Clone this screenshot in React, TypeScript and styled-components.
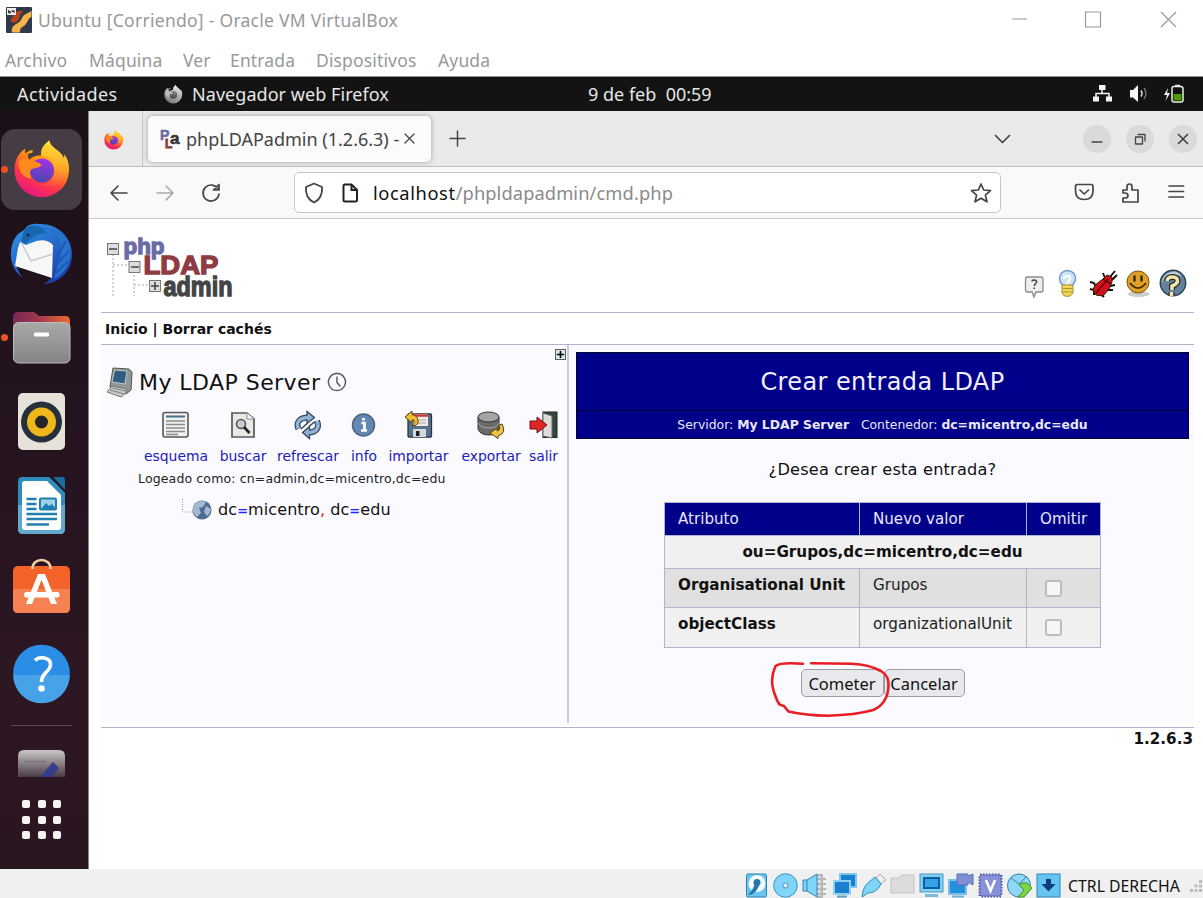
import React from "react";
import styled, { createGlobalStyle } from "styled-components";

const ui = '"Noto Sans", "Open Sans", sans-serif';
const dejavu = '"DejaVu Sans", sans-serif';
const line = "#b3b3cf";

const Global = createGlobalStyle`
  * { box-sizing: border-box; }
  body { margin: 0; background: #fff; }
  svg { display: block; flex: none; overflow: visible; }
`;

const Screen = styled.div`
  width: 1203px;
  height: 898px;
  display: flex;
  flex-direction: column;
  overflow: hidden;
  background: #fff;
`;

const Text = styled.span<{ $size: number; $ls?: number; $color?: string; $bold?: boolean; $font?: string }>`
  font-family: ${(p) => p.$font ?? dejavu};
  font-size: ${(p) => p.$size}px;
  letter-spacing: ${(p) => p.$ls ?? 0}px;
  color: ${(p) => p.$color ?? "#111"};
  font-weight: ${(p) => (p.$bold ? 700 : 400)};
  white-space: pre;
`;

/* ---------- host window ---------- */
const TitleBar = styled.header`
  height: 40px;
  flex: none;
  display: flex;
  align-items: center;
  padding-left: 6px;
`;
const TitleText = styled(Text)`
  margin-left: 6px;
  flex: 1;
`;
const MenuBar = styled.nav`
  height: 37px;
  flex: none;
  display: grid;
  grid-template-columns: 84px 94px 47px 86px 122px auto;
  align-items: center;
  padding: 4px 0 0 5px;
  border-bottom: 1px solid #8d8d8d;
`;

/* ---------- guest desktop ---------- */
const TopBar = styled.div`
  height: 34px;
  flex: none;
  background: #131313;
  display: grid;
  grid-template-columns: 147px 28px 396px 504px auto;
  align-items: center;
  padding-left: 17px;
`;
const Desktop = styled.div`
  height: 758px;
  flex: none;
  display: flex;
`;
const Dock = styled.aside`
  width: 89px;
  flex: none;
  display: flex;
  flex-direction: column;
  padding-top: 16px;
  background: linear-gradient(#1c1018, #251420 45%, #2c1722 75%, #2a1621);
  border-right: 1px solid #8a8488;
`;
const DockDivider = styled.div`
  height: 1px;
  width: 61px;
  margin: 10px 0 24px 11px;
  background: #5d4e57;
`;
const AppGrid = styled.div`
  display: grid;
  grid-template-columns: repeat(3, 8px);
  gap: 7.5px;
  margin: 23px 0 0 22px;
`;
const AppDot = styled.i`
  height: 8px;
  border-radius: 2px;
  background: #f4f2f3;
`;

/* ---------- browser ---------- */
const Browser = styled.main`
  flex: 1;
  display: flex;
  flex-direction: column;
  background: #fff;
`;
const TabStrip = styled.div`
  height: 56px;
  flex: none;
  display: flex;
  align-items: center;
  background: #eaeaea;
  border-bottom: 1px solid #bdbdbd;
`;
const PinnedTab = styled.div`
  width: 54px;
  height: 55px;
  display: flex;
  align-items: center;
  justify-content: center;
  border-right: 1px solid #c4c4c4;
  padding: 2px 3px 0 0;
`;
const Tab = styled.div`
  width: 283px;
  height: 46px;
  margin: 0 0 0 5px;
  padding-left: 12px;
  display: flex;
  align-items: center;
  background: #fbfbfb;
  border-radius: 5px;
  box-shadow: 0 0 4px 1px #b5b5b5;
`;
const TabTitle = styled(Text)`
  width: 218px;
  margin-left: 5px;
`;
const NewTab = styled.div`
  margin-left: 18px;
  width: 545px;
`;
const WindowButtons = styled.div`
  display: flex;
  gap: 15px;
  margin-left: 72px;
`;
const RoundButton = styled.div`
  width: 28px;
  height: 28px;
  border-radius: 50%;
  background: #dadada;
  display: flex;
  align-items: center;
  justify-content: center;
`;
const NavBar = styled.div`
  height: 52px;
  flex: none;
  display: flex;
  align-items: center;
  background: #f9f9fa;
  border-bottom: 1px solid #cdcdcd;
  padding-left: 20px;
`;
const NavButtons = styled.div`
  display: flex;
  gap: 26px;
  width: 185px;
`;
const UrlBox = styled.div`
  width: 707px;
  height: 41px;
  border: 1px solid #c6c6c6;
  border-radius: 5px;
  background: #fff;
  display: flex;
  align-items: center;
  padding-left: 9px;
`;
const PageGlyph = styled.svg`
  margin-left: 18px;
`;
const UrlText = styled.div`
  width: 597px;
  margin-left: 14px;
`;
const NavTools = styled.div`
  display: flex;
  gap: 25px;
  margin-left: 73px;
`;

/* ---------- phpLDAPadmin page ---------- */
const Page = styled.div`
  width: 1093px;
  margin-left: 12px;
  display: flex;
  flex-direction: column;
`;
const PageHeader = styled.div`
  height: 94px;
  display: flex;
  justify-content: space-between;
  border-bottom: 1px solid ${line};
  padding: 19px 6px 0 5px;
`;
const HeaderIcons = styled.div`
  display: flex;
  margin-top: 31px;
`;
const Control = styled.div`
  height: 32px;
  border-bottom: 1px solid ${line};
  padding: 0 0 0 4px;
  display: flex;
  align-items: center;
`;
const Panels = styled.div`
  height: 378px;
  display: flex;
`;
const TreePanel = styled.section`
  width: 468px;
  background: #fbfbff;
  border-right: 2px solid #cacadb;
  display: flex;
  flex-direction: column;
`;
const ExpandRow = styled.div`
  display: flex;
  justify-content: flex-end;
  padding: 4px 1px 0 0;
`;
const ExpandBox = styled.div`
  width: 11px;
  height: 11px;
  border: 1px solid #536068;
  background: #dce5e8;
  display: flex;
  align-items: center;
  justify-content: center;
`;
const ServerRow = styled.div`
  height: 34px;
  margin-top: 5px;
  padding-left: 5px;
  display: flex;
  align-items: center;
`;
const ServerName = styled(Text)`
  margin: 0 6px 0 6px;
`;
const ToolRow = styled.div`
  display: grid;
  grid-template-columns: 68px 66px 64px 48px 61px 84px 21px;
  justify-items: center;
  height: 55px;
  margin: 12px 0 0 41px;
`;
const Tool = styled.div`
  width: 80px;
  display: flex;
  flex-direction: column;
  align-items: center;
  gap: 9px;
`;
const LoginRow = styled.div`
  height: 24px;
  padding-left: 37px;
  display: flex;
  align-items: center;
`;
const TreeRow = styled.div`
  height: 39px;
  padding-left: 80px;
  display: flex;
  align-items: center;
`;
const TreeText = styled(Text)`
  margin-left: 6px;
`;
const MainPanel = styled.section`
  flex: 1;
  background: #fbfbff;
  display: flex;
  flex-direction: column;
  align-items: center;
  padding: 7px 5px 0 7px;
`;
const Banner = styled.div`
  width: 613px;
  flex: none;
  border: 1px solid #05052e;
  background: #00008b;
`;
const BannerTitle = styled.div`
  height: 58px;
  border-bottom: 1px solid #03032c;
  display: flex;
  align-items: center;
  justify-content: center;
`;
const BannerSub = styled.div`
  height: 27px;
  display: flex;
  align-items: center;
  justify-content: center;
`;
const Question = styled.div`
  height: 63px;
  display: flex;
  align-items: center;
  padding-bottom: 3px;
`;
const Entries = styled.div`
  width: 437px;
  flex: none;
  display: grid;
  grid-template-columns: 194px 166px 73px;
  gap: 1px;
  padding: 1px;
  background: ${line};
`;
const Cell = styled.div<{ $bg: string; $h: number; $top?: boolean; $full?: boolean }>`
  height: ${(p) => p.$h}px;
  background: ${(p) => p.$bg};
  display: flex;
  align-items: ${(p) => (p.$top ? "flex-start" : "center")};
  padding: ${(p) => (p.$top ? "7px" : "0")} 0 0 13px;
  ${(p) => p.$full && "grid-column: 1 / -1; justify-content: center; padding: 0;"}
`;
const Check = styled.div`
  width: 17px;
  height: 17px;
  margin: 4px 0 0 5px;
  border: 2px solid #bdbdc1;
  border-radius: 3px;
  background: #f6f6f6;
`;
const Actions = styled.div`
  position: relative;
  display: flex;
  margin-top: 21px;
`;
const Button = styled.button<{ $w: number }>`
  width: ${(p) => p.$w}px;
  height: 28px;
  padding: 0;
  border: 1px solid #9c9ca6;
  border-radius: 5px;
  background: #e9e9ed;
  display: flex;
  align-items: center;
  justify-content: center;
`;
const PenMark = styled.svg`
  position: absolute;
  left: -33.500px;
  top: -10px;
`;
const Footer = styled.footer`
  margin-top: 4px;
  border-top: 1px solid ${line};
  display: flex;
  justify-content: flex-end;
  padding: 2px 1px 0 0;
`;

/* ---------- host status bar ---------- */
const StatusBar = styled.footer`
  height: 29px;
  flex: none;
  background: #f0f0f0;
  display: flex;
  align-items: center;
  gap: 4.2px;
  padding: 4px 0 0 744px;
`;
const HostKey = styled(Text)`
  width: 118px;
  margin-left: 3px;
`;

/* ---------- drawings ---------- */
const FirefoxShape = ({ id, gray }: { id: string; gray?: boolean }) => (
  <g>
    <defs>
      <linearGradient id={`${id}a`} x1="0.8" y1="0" x2="0.3" y2="1">
        <stop offset="0" stopColor={gray ? "#fff" : "#fff044"} />
        <stop offset=".4" stopColor={gray ? "#bbb" : "#ff980e"} />
        <stop offset=".7" stopColor={gray ? "#999" : "#ff3647"} />
        <stop offset="1" stopColor={gray ? "#777" : "#e31587"} />
      </linearGradient>
      <linearGradient id={`${id}b`} x1=".6" y1="0" x2=".4" y2="1">
        <stop offset="0" stopColor={gray ? "#888" : "#a034e6"} />
        <stop offset="1" stopColor={gray ? "#444" : "#4a44b0"} />
      </linearGradient>
      <linearGradient id={`${id}c`} x1=".5" y1="0" x2=".4" y2="1">
        <stop offset="0" stopColor={gray ? "#eee" : "#ffe63a"} />
        <stop offset=".6" stopColor={gray ? "#bbb" : "#ffa52b"} />
        <stop offset="1" stopColor={gray ? "#999" : "#ff4a45"} />
      </linearGradient>
    </defs>
    <path d="M34.500 0C28 5 26 10 26.500 15C20 15 17 17 15 19C13 17 13 15 14 13C18 13 18.500 12 18 9.500C14 10 12.500 11.500 11 13C10 11 10.500 9.500 11 8C3 13 0 21 0 29A27 27 0 0 0 54.500 30C55 23 52.500 17 49.500 14C50 16 50 17 49.500 18C46 9 36 8 34.500 0Z" fill={`url(#${id}a)`} />
    <path d="M35 0C28 5 26 10 27 15C34 16 40 21 40 30C40 39 34 44 26 44C36 48 46 44 50 36C55 28 54 19 49.500 14C50 16 50 17 49.500 18C46 9 36 8 35 0Z" fill={`url(#${id}c)`} opacity=".9" />
    <circle cx="27.500" cy="30" r="12" fill={`url(#${id}b)`} />
    <path d="M4 22C7 17 11 17 15 19.500C19 20 23 21 27.500 24.500C24 28 20 27 16.500 29C15 31 15 34 17 38C9 38 4 31 4 22Z" fill={gray ? "#bbb" : "#ff8a1e"} />
  </g>
);

const DockSlot = ({ children }: { children: React.ReactNode }) => (
  <svg width="84" height="84" viewBox="0 0 84 84">{children}</svg>
);

const DockIcons = () => (
  <>
    <DockSlot>
      <rect x="1" y="2" width="81" height="81" rx="14" fill="#463c43" />
      <circle cx="4.500" cy="42.500" r="3.500" fill="#e95420" />
      <g transform="translate(14.500 13.500)"><FirefoxShape id="dockfx" /></g>
    </DockSlot>
    <DockSlot>
      <defs>
        <linearGradient id="tb" x1="0" y1="0" x2=".6" y2="1">
          <stop offset="0" stopColor="#2f9be8" /><stop offset="1" stopColor="#1e3fb0" />
        </linearGradient>
      </defs>
      <path d="M24 19C27 14 32 12 39 13C56 12 72 25 72 43C72 60 60 72 44 73C47 71 50 69 52 66L16 54C19 62 22 67 25 68C14 62 10 51 11 40C12 30 16 23 24 19Z" fill="url(#tb)" />
      <path d="M40 17C55 19 63 28 61 42L54 68C66 62 72 50 70 36C66 22 55 15 40 17Z" fill="#2673cc" />
      <path d="M20 31L18 37L15 55L52 67L53 34C44 25 34 31 26 34Z" fill="#f7f7f7" />
      <path d="M21 31L31 50L53 43" fill="none" stroke="#c9c9cf" strokeWidth="1.500" />
      <path d="M24 19C30 12 42 13 47 23C38 21 31 27 26 33L21 31Z" fill="#1766b0" />
      <path d="M66 30L58 44M69 40L56 54M68 50L55 63" stroke="#1e57b8" strokeWidth="2" />
      <circle cx="28" cy="24" r="1.500" fill="#0d2a50" />
    </DockSlot>
    <DockSlot>
      <defs>
        <linearGradient id="fo"><stop offset="0" stopColor="#77285a" /><stop offset=".45" stopColor="#a1384b" /><stop offset="1" stopColor="#ef6a31" /></linearGradient>
        <linearGradient id="fg" x2="0" y2="1"><stop offset="0" stopColor="#a9a9a9" /><stop offset="1" stopColor="#848484" /></linearGradient>
      </defs>
      <circle cx="4.500" cy="42.500" r="3.500" fill="#e95420" />
      <path d="M13 22Q13 17 18 17H34L39 21H65Q70 21 70 26V40H13Z" fill="url(#fo)" />
      <rect x="13.500" y="27.500" width="56.500" height="40.500" rx="5" fill="url(#fg)" stroke="#bcbcbc" />
      <rect x="34" y="37.500" width="15" height="4" rx="1" fill="#fff" />
    </DockSlot>
    <DockSlot>
      <rect x="18" y="14" width="47" height="57" rx="5" fill="#e6e2da" />
      <circle cx="41.500" cy="43" r="20.500" fill="#25303a" />
      <circle cx="41.500" cy="43" r="14.500" fill="#efb71c" />
      <circle cx="41.500" cy="43" r="6.500" fill="#262626" />
    </DockSlot>
    <DockSlot>
      <path d="M22 14H49L65 28V66Q65 71 60 71H23Q18 71 18 66V19Q18 14 22 14Z" fill="#2f8dbd" />
      <path d="M18 42H65V66Q65 71 60 71H23Q18 71 18 66Z" fill="#62a9cd" />
      <path d="M49 13H53L66 27V31Z" fill="#25141f" />
      <path d="M53 14H62Q65 14 65 17V27Z" fill="#1d6a9c" />
      <path d="M25 18H47L61 32V64Q61 67 58 67H25Q22 67 22 64V21Q22 18 25 18Z" fill="#fff" />
      <path d="M26.500 36H36.500M26.500 41H36.500M26.500 46H36.500M26.500 51H57M26.500 56H57M26.500 61.500H49" stroke="#1f7fae" strokeWidth="2.400" />
      <rect x="40" y="35.500" width="16" height="11" rx="1" fill="#9fd3ec" stroke="#1f7fae" strokeWidth="2" />
      <path d="M41 46L46 40L49 43L52 41L56 46Z" fill="#1f7fae" />
    </DockSlot>
    <DockSlot>
      <rect x="13" y="19" width="57" height="47" rx="5" fill="#f4632a" />
      <path d="M13 42H70V61Q70 66 65 66H18Q13 66 13 61Z" fill="#f68253" />
      <path d="M32.500 22C32 10 51 10 50.500 22" fill="none" stroke="#f6cfa0" strokeWidth="2.400" />
      <path d="M38 27H45L57 57H51L41.500 33L32 57H26Z" fill="#fff" />
      <rect x="24" y="45" width="35.500" height="5.500" rx="2.500" fill="#fff" />
    </DockSlot>
    <DockSlot>
      <circle cx="41.500" cy="42" r="28.300" fill="#2b8ee6" />
      <path d="M13.200 44H69.800A28.300 28.300 0 0 1 13.200 44Z" fill="#47a2e8" />
      <path d="M35 29.500C39 25 51 26 50.500 34C50 41 41 42 41.500 51" fill="none" stroke="#fff" strokeWidth="3.600" />
      <circle cx="41.500" cy="57.500" r="3.200" fill="#fff" />
    </DockSlot>
  </>
);

const EditorIcon = () => (
  <svg width="84" height="27" viewBox="0 0 84 27">
    <defs><linearGradient id="ed" x2="0" y2="1"><stop offset="0" stopColor="#c9c5c8" /><stop offset="1" stopColor="#4a3b44" /></linearGradient></defs>
    <path d="M18 27V6Q18 0 24 0H59Q65 0 65 6V27Z" fill="url(#ed)" />
    <path d="M24 11.500H46M24 17H40" stroke="#79737a" strokeWidth="1.500" />
    <path d="M40 27L53 12L59 18L52 27Z" fill="#363c8c" />
  </svg>
);

const VBoxIcon = () => (
  <svg width="26" height="26" viewBox="0 0 26 26">
    <rect width="26" height="26" rx="1" fill="#303a4a" />
    <path d="M4 14Q12 19 14 8L17 4Q12 3 9 6Z" fill="#b8431b" />
    <path d="M6 25.500C5 20 8 18 12 16C17 13 15 9 20 7L25.500 4V10C21 12 22 16 18 19C14 21 14 23 14 25.500Z" fill="#f5b54a" />
    <rect x="1" y="1" width="9" height="7" fill="#eee" />
    <path d="M2.500 3V6H4.500V4.500H2.500M6 3V4.500H8M8 3V6" fill="none" stroke="#333" />
  </svg>
);

const Stroke = ({ w, h, d, c = "#444", sw = 1.6 }: { w: number; h: number; d: string; c?: string; sw?: number }) => (
  <svg width={w} height={h} viewBox={`0 0 ${w} ${h}`} fill="none" stroke={c} strokeWidth={sw} strokeLinejoin="round" strokeLinecap="round">
    <path d={d} />
  </svg>
);

const WinControls = () => (
  <svg width="191" height="20" viewBox="0 0 191 20" fill="none" stroke="#999" strokeWidth="1.200">
    <path d="M0 9H15M73.500 2H88.500V17H73.500ZM149 2L164 17M164 2L149 17" />
  </svg>
);

const SystemTray = () => (
  <svg width="94" height="22" viewBox="0 0 94 22">
    <g fill="#f5f5f5">
      <rect x="7" y="2" width="6.500" height="5" /><rect x="1" y="13.500" width="6" height="5" /><rect x="14" y="13.500" width="6" height="5" />
      <path d="M38 7H41L46 2V19L41 14.500H38Z" />
      <path d="M76 5L72 12H75L73.500 18L78 10H75Z" />
    </g>
    <path d="M10 6V10M4 14V10.500H17V14" fill="none" stroke="#f5f5f5" strokeWidth="1.500" />
    <path d="M49 7.500Q51 10.500 49 13.500" fill="none" stroke="#ddd" strokeWidth="1.500" />
    <path d="M52 5Q56 10.500 52 16" fill="none" stroke="#777" strokeWidth="1.500" />
    <path d="M82 3.500H88M81.500 3.500H88.500Q91 3.500 91 6V17Q91 19 89 19H82Q80 19 80 17V5Q80 3.500 81.500 3.500ZM83 2.500H88" fill="none" stroke="#e6f0e0" strokeWidth="1.500" />
    <rect x="81.500" y="11" width="8" height="6.500" fill="#4e9a06" />
  </svg>
);

const PlaLogo = () => (
  <svg width="130" height="66" viewBox="0 0 130 66">
    <path d="M7 16V58M7 27H22M28 33V58M28 47H42" stroke="#d2d2cc" strokeWidth="2" strokeDasharray="2 2" fill="none" />
    <g fill="#ddd" stroke="#777">
      <rect x="1.500" y="5.500" width="11" height="11" /><rect x="23" y="23.500" width="11" height="11" /><rect x="43.500" y="42.500" width="11" height="11" />
    </g>
    <path d="M3 11H11M25 29H33M45 48H53M49 44V52" stroke="#444" strokeWidth="1.600" />
    <g fontFamily="Liberation Sans, sans-serif" fontWeight="700" strokeWidth="1.300">
      <text x="17.500" y="16" fontSize="22" textLength="41" lengthAdjust="spacingAndGlyphs" fill="#6b6ba6" stroke="#6b6ba6">php</text>
      <text x="37.500" y="36" fontSize="25.500" textLength="75" lengthAdjust="spacingAndGlyphs" fill="#8f3b42" stroke="#8f3b42">LDAP</text>
      <text x="57.500" y="58" fontSize="27" textLength="69" lengthAdjust="spacingAndGlyphs" fill="#444" stroke="#444">admin</text>
    </g>
  </svg>
);

const PageIcons = () => (
  <svg width="164" height="32" viewBox="0 0 164 32">
    <path d="M1.500 10Q1.500 8 3.500 8H17Q19 8 19 10V21Q19 23 17 23H12L10 28L8 23H3.500Q1.500 23 1.500 21Z" fill="#eee" stroke="#8a8a8a" strokeWidth="1.300" />
    <path d="M8 12.500Q8 11 10 11Q13 11 12.500 13.500Q10.500 15 10.300 17M10.300 18.500V20" fill="none" stroke="#444" strokeWidth="1.500" />
    <circle cx="43.500" cy="9.500" r="8" fill="#cfe3f7" stroke="#6b97ca" strokeWidth="1.500" />
    <path d="M40 10Q40 7 43.500 7Q47 7 46 10L43 15" fill="none" stroke="#fff" strokeWidth="2" />
    <path d="M38 16H49V24Q47 27.500 43.500 27.500Q39 27.500 38 24Z" fill="#f0d75a" stroke="#a98e2c" />
    <path d="M38.500 19.500H48.500M38.500 23H48.500" stroke="#b2952d" />
    <path d="M66 13L70 14L72 18M66 20L70 21V26M81 9L79 4M86 8L91 2M88 11L93 6M86 17L91 16M82 21H89M77 25L80 28" stroke="#111" strokeWidth="1.900" fill="none" />
    <path d="M71 16L79 10L83 6L88 8L88 13L85 20L79 27L72 26L69 21Z" fill="#d40f1a" stroke="#220" />
    <path d="M72 24L84 10M79 10L87 15" stroke="#500" strokeWidth="1.400" />
    <ellipse cx="114.500" cy="25" rx="11" ry="3" fill="#ccc" />
    <circle cx="114" cy="13" r="11" fill="#e0a025" stroke="#7b5310" />
    <path d="M110.500 6.500V12.500M117.500 6.500V12.500" stroke="#222" strokeWidth="2.200" />
    <path d="M106 14Q114 24 122 14" fill="none" stroke="#3d2600" strokeWidth="1.700" />
    <circle cx="149" cy="14" r="12.700" fill="#62829d" stroke="#2e4456" strokeWidth="1.500" />
    <path d="M137.500 14Q143.500 3 157.500 7Q153.500 1 146.500 3Q138.500 6 137.500 14Z" fill="#b9cbda" />
    <path d="M143 12Q143.500 8 148.500 8Q154 8 153.500 13Q151.500 16 148 17V21M147.500 23V27" fill="none" stroke="#28241a" strokeWidth="6" />
    <path d="M143 12Q143.500 8 148.500 8Q154 8 153.500 13Q151.500 16 148 17V21M147.500 23V27" fill="none" stroke="#f2e6ae" strokeWidth="3.600" />
  </svg>
);

const ServerIcon = () => (
  <svg width="27" height="30" viewBox="0 0 27 30">
    <path d="M7 1L23 2L26 5L25 23L20 27L4 20Z" fill="#8f9896" stroke="#555" />
    <path d="M8.500 3L21 4L19 17L6 15Z" fill="#315e80" stroke="#c2cac8" />
    <path d="M6 19L21 22L20 26L15 30L1 25Z" fill="#c3cac6" stroke="#777" />
    <path d="M4 23L18 27M6 21L20 24" stroke="#7c8683" />
  </svg>
);

const refreshArcs = "M4.500 18C1.500 11 6 6.500 14 6.500M23 10C26 17 22 21.500 14.500 21.500";
const toolDrawings: Record<string, React.ReactNode> = {
  esquema: (
    <>
      <rect x="1" y="1.500" width="25" height="24.500" rx="2" fill="#f1f1ee" stroke="#55585b" strokeWidth="1.600" />
      <path d="M4 5.500H23" stroke="#45708c" strokeWidth="2" />
      <path d="M4 10H23M4 13.500H23M4 17H23M4 20.500H23M4 23.500H16" stroke="#8b8d8b" strokeWidth="1.300" />
    </>
  ),
  buscar: (
    <>
      <path d="M3 2H18L25 8V26H3Z" fill="#e9e9e4" stroke="#55585b" strokeWidth="1.700" />
      <path d="M18 2V8H25" fill="#fff" stroke="#888" />
      <circle cx="12" cy="13" r="4.500" fill="#c6d0d2" stroke="#555" strokeWidth="1.600" />
      <path d="M15 16L20.500 22" stroke="#222" strokeWidth="2.600" />
    </>
  ),
  refrescar: (
    <>
      <path d={refreshArcs} fill="none" stroke="#30465c" strokeWidth="6" />
      <path d="M13 0.500L20.500 6.500L13 12.500ZM15.500 15.500L8.500 21.500L15.500 27.500Z" fill="#92b2d2" stroke="#30465c" strokeWidth="1.300" />
      <path d={refreshArcs} fill="none" stroke="#92b2d2" strokeWidth="3.600" />
      <path d="M7 18L13 12.500M21 10.500L15 15.500" stroke="#30465c" strokeWidth="1.500" />
    </>
  ),
  info: (
    <>
      <circle cx="13.500" cy="14" r="11" fill="#6288b3" stroke="#4c6482" strokeWidth="1.500" />
      <path d="M11.500 12H14.500V19M11 19.500H17M13.500 7V9.500" fill="none" stroke="#fff" strokeWidth="2.700" />
    </>
  ),
  importar: (
    <>
      <rect x="3" y="3" width="23.500" height="23" rx="1" fill="#55718c" stroke="#273645" strokeWidth="1.300" />
      <rect x="8" y="3" width="15" height="12" fill="#f0e8e6" />
      <path d="M8 4.500H23" stroke="#c23b3b" strokeWidth="2.500" />
      <path d="M11 9H21M11 12H21" stroke="#aaa" />
      <rect x="8" y="18" width="13" height="8" fill="#d6d9dc" />
      <rect x="11" y="20" width="3.500" height="5" fill="#222" />
      <path d="M0 6L7 0V3.500Q14 5 13 12Q12 15 7 15Q10 13 9 9H7V12Z" fill="#eebd36" stroke="#5d4208" />
    </>
  ),
  exportar: (
    <>
      <path d="M1 6V18Q3 24 12 24Q21 24 22 18V6Z" fill="#6a6a6a" stroke="#333" />
      <ellipse cx="11.500" cy="6" rx="10.500" ry="5" fill="#a5a5a3" stroke="#333" />
      <path d="M1 12Q4 17 12 17Q20 17 22 12" fill="none" stroke="#aaa" />
      <path d="M25 13Q30 22 21 25V27.500L13 22L20 17V20Q24 19 22 14Z" fill="#eec247" stroke="#5d4208" />
    </>
  ),
  salir: (
    <>
      <rect x="13" y="1" width="14" height="25.500" fill="#31483c" stroke="#222" />
      <path d="M13 2L22 5V27L13 25Z" fill="#dcdcd8" stroke="#666" />
      <path d="M0 10H7V6L17 14L7 22V18H0Z" fill="#df2525" stroke="#701010" />
    </>
  ),
};

const StatusIcon = ({ children }: { children: React.ReactNode }) => (
  <svg width="25" height="25" viewBox="0 0 25 25">{children}</svg>
);
const sky = "#7fd4f7";
const blue = "#1b7fd0";
const StatusIcons = () => (
  <>
    <StatusIcon>
      <rect x="2.500" y="1" width="20" height="23" rx="1.500" fill="#68c5f0" stroke="#2b83b5" />
      <circle cx="13" cy="10.500" r="8.500" fill="#f3fbff" />
      <circle cx="13" cy="9.500" r="3.500" fill="#2874a8" />
      <path d="M4 22Q11 22 15 13L11 11Q9 17 4 22Z" fill="#2874a8" />
    </StatusIcon>
    <StatusIcon><circle cx="12.500" cy="12.500" r="11.800" fill={sky} stroke="#3a94c2" /><circle cx="12.500" cy="12.500" r="2.500" fill="#eee" stroke="#3a94c2" /></StatusIcon>
    <StatusIcon>
      <path d="M15 2H20V24H15M15 6H24M15 11H24M15 16H24M15 21H24" fill="#ddd" stroke="#b7b7b7" strokeWidth="2" />
      <path d="M1 7H5L15 1V24L5 18H1Z" fill={sky} stroke="#2e86b7" /><path d="M5 7V18" stroke="#2e86b7" />
    </StatusIcon>
    <StatusIcon>
      <rect x="8" y="1" width="16" height="13" fill={blue} stroke="#7fc6ee" strokeWidth="2" />
      <rect x="2" y="8" width="16" height="13" fill={blue} stroke="#8ed0f2" strokeWidth="2" /><path d="M5 23.500H15" stroke="#5a9ec2" strokeWidth="2" />
    </StatusIcon>
    <StatusIcon>
      <path d="M15 5L19 1L25 7L20 11Z" fill="#eee" stroke="#aaa" />
      <path d="M1 24Q2 13 8 9L14 4L20 11Q16 20 7 20Z" fill={sky} stroke="#358cb9" />
    </StatusIcon>
    <StatusIcon><path d="M1 20V5H8L12 2H24V20Z" fill="#dcdcdc" stroke="#c3c3c3" /></StatusIcon>
    <StatusIcon>
      <rect x="1" y="1" width="23" height="18" fill="#7ed1f5" stroke="#4d9bc5" /><rect x="5" y="5" width="15" height="10" fill="#37a2e8" stroke="#0b5f9f" strokeWidth="2" />
      <path d="M6 22.500H19" stroke="#7dbad8" strokeWidth="3" />
    </StatusIcon>
    <StatusIcon>
      <rect x="1" y="7" width="17" height="14" fill="#2191dd" stroke="#79bfe8" strokeWidth="2" /><path d="M4 23.500H16" stroke="#6cb2d8" strokeWidth="2" />
      <path d="M9 1H20V3L25 1V12L20 9V12H9Z" fill="#7f8fd6" stroke="#5b6db8" />
    </StatusIcon>
    <StatusIcon>
      <rect x="2" y="2" width="21" height="21" fill="none" stroke="#4450a0" strokeWidth="3" strokeDasharray="1.500 1.500" />
      <rect x="2" y="2" width="21" height="21" rx="2" fill="#8790d8" stroke="#606ab8" /><path d="M8 7L12.500 18L17 7" fill="none" stroke="#fff" strokeWidth="2.500" />
    </StatusIcon>
    <StatusIcon>
      <ellipse cx="12" cy="12.500" rx="11.500" ry="11.500" fill="#8ed7f5" stroke="#2d83ae" /><path d="M4 5L12 11L20 3" fill="none" stroke="#2d83ae" />
      <path d="M15 10H20L25 15L17 24H11L17 17L12 12Z" fill="#7ed348" stroke="#439421" />
    </StatusIcon>
    <StatusIcon><rect x="1" y="1" width="23" height="23" fill="#66c4f2" stroke="#3285b5" /><path d="M10 6H15V11H19.500L12.500 18.500L5.500 11H10Z" fill="#0d3c80" /></StatusIcon>
  </>
);

const tools = ["esquema", "buscar", "refrescar", "info", "importar", "exportar", "salir"];
const menu = ["Archivo", "Máquina", "Ver", "Entrada", "Dispositivos", "Ayuda"];
const rows = [
  { name: "Organisational Unit", value: "Grupos", bg: "#e0e0e0", h: 38 },
  { name: "objectClass", value: "organizationalUnit", bg: "#f0f0f0", h: 39 },
];

export default function App() {
  return (
    <Screen>
      <Global />
      <TitleBar>
        <VBoxIcon />
        <TitleText $font={ui} $size={17.5} $ls={0.27} $color="#999">Ubuntu [Corriendo] - Oracle VM VirtualBox</TitleText>
        <WinControls />
      </TitleBar>
      <MenuBar>
        {menu.map((m) => <Text key={m} $font={ui} $size={17.5} $ls={0.15} $color="#999">{m}</Text>)}
      </MenuBar>
      <TopBar>
        <Text $font={ui} $size={18} $ls={0.4} $color="#e6e6e6">Actividades</Text>
        <svg width="19" height="19" viewBox="0 0 56 58"><FirefoxShape id="top" gray /></svg>
        <Text $font={ui} $size={18} $ls={0.05} $color="#e6e6e6">Navegador web Firefox</Text>
        <Text $font={ui} $size={18} $color="#e6e6e6">9 de feb  00:59</Text>
        <SystemTray />
      </TopBar>
      <Desktop>
        <Dock>
          <DockIcons />
          <DockDivider />
          <EditorIcon />
          <AppGrid>{Array.from({ length: 9 }, (_, i) => <AppDot key={i} />)}</AppGrid>
        </Dock>
        <Browser>
          <TabStrip>
            <PinnedTab><svg width="20" height="20" viewBox="0 0 56 58"><FirefoxShape id="pin" /></svg></PinnedTab>
            <Tab>
              <svg width="21" height="20" viewBox="0 0 21 20" fontFamily="Liberation Sans, sans-serif" fontWeight="700">
                <text x="0" y="11" fontSize="14" fill="#6b6ba6" stroke="#6b6ba6" strokeWidth=".6">P</text>
                <text x="5" y="19" fontSize="12" fill="#8f3b42" stroke="#8f3b42" strokeWidth=".8">L</text>
                <text x="10" y="15" fontSize="17" fill="#333" stroke="#333" strokeWidth=".6">a</text>
              </svg>
              <TabTitle $font={ui} $size={18} $color="#444">phpLDAPadmin (1.2.6.3) -</TabTitle>
              <Stroke w={11} h={11} d="M1 1L10 10M10 1L1 10" sw={1.3} />
            </Tab>
            <NewTab><Stroke w={17} h={17} d="M8.500 1V16M1 8.500H16" sw={1.5} /></NewTab>
            <Stroke w={17} h={10} d="M1.500 1.500L8.500 8.500L15.500 1.500" sw={1.7} />
            <WindowButtons>
              <RoundButton><Stroke w={12} h={12} d="M1 9H11" sw={1.4} /></RoundButton>
              <RoundButton><Stroke w={12} h={12} d="M1.500 4H8.500V11H1.500ZM4 1.500H11V8" sw={1.3} /></RoundButton>
              <RoundButton><Stroke w={12} h={12} d="M1.500 1.500L10.500 10.500M10.500 1.500L1.500 10.500" sw={1.7} /></RoundButton>
            </WindowButtons>
          </TabStrip>
          <NavBar>
            <NavButtons>
              <Stroke w={20} h={20} d="M18 10H2M9 3L2 10L9 17" />
              <Stroke w={20} h={20} d="M2 10H18M11 3L18 10L11 17" c="#aaa" />
              <Stroke w={20} h={20} d="M17 6A8 8 0 1 0 18 11M18 1.500V7H12.500Z" sw={1.7} />
            </NavButtons>
            <UrlBox>
              <Stroke w={20} h={22} d="M10 1.500L18 5Q19 16 10 20.500Q1 16 2 5Z" sw={1.8} />
              <PageGlyph width="17" height="20" viewBox="0 0 17 20" fill="none" stroke="#222" strokeWidth="2">
                <path d="M1.500 3Q1.500 1.500 3 1.500H9.500L15 7V17Q15 18.500 13.500 18.500H3Q1.500 18.500 1.500 17ZM9.500 1.500V7H15" />
              </PageGlyph>
              <UrlText>
                <Text $font={ui} $size={18.3} $ls={0.6} $color="#111">localhost</Text>
                <Text $font={ui} $size={18.3} $ls={0.1} $color="#8a8a8a">/phpldapadmin/cmd.php</Text>
              </UrlText>
              <Stroke w={22} h={22} d="M11 2L13.700 8L20.500 8.600L15.400 13.100L17 19.800L11 16.200L5 19.800L6.600 13.100L1.500 8.600L8.300 8Z" sw={1.7} />
            </UrlBox>
            <NavTools>
              <Stroke w={21} h={20} d="M3.500 2.500H17Q19 2.500 19 4.500V9Q19 17.500 10.200 17.500Q1.500 17.500 1.500 9V4.500Q1.500 2.500 3.500 2.500ZM6 8L10.200 12L14.500 8" sw={1.7} />
              <Stroke w={21} h={22} d="M3 8H7V4.500Q7 2 9.500 2Q12 2 12 4.500V8H18V20H3V16H5Q8 16 8 13.500Q8 11 5 11H3Z" sw={1.7} />
              <Stroke w={21} h={20} d="M3 4H17.500M3 9.500H17.500M3 15H17.500" sw={1.7} />
            </NavTools>
          </NavBar>
          <Page>
            <PageHeader>
              <PlaLogo />
              <HeaderIcons><PageIcons /></HeaderIcons>
            </PageHeader>
            <Control><Text $size={14} $bold>Inicio | Borrar cachés</Text></Control>
            <Panels>
              <TreePanel>
                <ExpandRow><ExpandBox><Stroke w={9} h={9} d="M4.500 1.500V7.500M1.500 4.500H7.500" c="#000" /></ExpandBox></ExpandRow>
                <ServerRow>
                  <ServerIcon />
                  <ServerName $size={22} $ls={0.45}>My LDAP Server</ServerName>
                  <Stroke w={20} h={20} d="M10 1.500A8.500 8.500 0 1 1 9.900 1.500M10 5V10.500L13 14" c="#555" sw={1.4} />
                </ServerRow>
                <ToolRow>
                  {tools.map((t) => (
                    <Tool key={t}>
                      <svg width="28" height="28" viewBox="0 0 28 28">{toolDrawings[t]}</svg>
                      <Text $size={13.9} $color="#2020b8">{t}</Text>
                    </Tool>
                  ))}
                </ToolRow>
                <LoginRow><Text $size={12.5} $ls={0.14} $color="#222">Logeado como: cn=admin,dc=micentro,dc=edu</Text></LoginRow>
                <TreeRow>
                  <svg width="31" height="22" viewBox="0 0 31 22">
                    <path d="M1.500 0V13H12" fill="none" stroke="#999" strokeDasharray="1 1.500" />
                    <circle cx="21" cy="11" r="9.500" fill="#4c6a92" /><path d="M14 5Q19 0 25 3L22 8L18 9L20 14L16 18Q9 12 14 5M25 7L30 10Q29 15 26 17L23 13Z" fill="#a4b8cf" />
                  </svg>
                  <TreeText $size={16} $ls={0.1} $color="#111">
                    dc<Text as="b" $size={13} $bold $color="#2222ff">=</Text>micentro<Text $size={16} $color="#e02020">, </Text>dc<Text as="b" $size={13} $bold $color="#2222ff">=</Text>edu
                  </TreeText>
                </TreeRow>
              </TreePanel>
              <MainPanel>
                <Banner>
                  <BannerTitle><Text $size={24} $ls={0.4} $color="#f0f0fa">Crear entrada LDAP</Text></BannerTitle>
                  <BannerSub>
                    <Text $size={12.4} $color="#e8e8f6">Servidor: <b>My LDAP Server</b>{"   "}Contenedor: <b>dc=micentro,dc=edu</b></Text>
                  </BannerSub>
                </Banner>
                <Question><Text $size={16.2} $ls={0.18}>¿Desea crear esta entrada?</Text></Question>
                <Entries>
                  {["Atributo", "Nuevo valor", "Omitir"].map((h) => (
                    <Cell key={h} $bg="#00008b" $h={32}><Text $size={15.1} $color="#e8e8f8">{h}</Text></Cell>
                  ))}
                  <Cell $bg="#f0f0f0" $h={32} $full><Text $size={15.2} $bold>ou=Grupos,dc=micentro,dc=edu</Text></Cell>
                  {rows.map((r) => (
                    <React.Fragment key={r.name}>
                      <Cell $bg={r.bg} $h={r.h} $top><Text $size={15.2} $bold>{r.name}</Text></Cell>
                      <Cell $bg={r.bg} $h={r.h} $top><Text $size={15.2} $color="#222">{r.value}</Text></Cell>
                      <Cell $bg={r.bg} $h={r.h} $top><Check /></Cell>
                    </React.Fragment>
                  ))}
                </Entries>
                <Actions>
                  <Button $w={83}><Text $font={ui} $size={16.5}>Cometer</Text></Button>
                  <Button $w={81}><Text $font={ui} $size={16.5}>Cancelar</Text></Button>
                  <PenMark width="126" height="62" viewBox="767 659 126 62" fill="none" stroke="#ec1c24" strokeWidth="2.600" strokeLinecap="round">
                    <path d="M803 663.700Q780 662 775.500 666C771 676 771 684 775 695Q777 701 779.500 704.500L784 706L788.500 711.500Q806 715.500 828 715.700Q855 715 873.500 710C882 706 888 698 888.500 686C889 679 886 674 881 671C870 665 860 664 852 663.700L811 663.200" />
                  </PenMark>
                </Actions>
              </MainPanel>
            </Panels>
            <Footer><Text $size={15.2} $bold>1.2.6.3</Text></Footer>
          </Page>
        </Browser>
      </Desktop>
      <StatusBar>
        <StatusIcons />
        <HostKey $font={ui} $size={15.8}>CTRL DERECHA</HostKey>
        <svg width="13" height="13" viewBox="0 0 13 13" fill="#bbb"><path d="M9 1h3v3h-3zM9 5.500h3v3h-3zM9 10h3v3h-3zM4.500 5.500h3v3h-3zM4.500 10h3v3h-3zM0 10h3v3H0z" /></svg>
      </StatusBar>
    </Screen>
  );
}
